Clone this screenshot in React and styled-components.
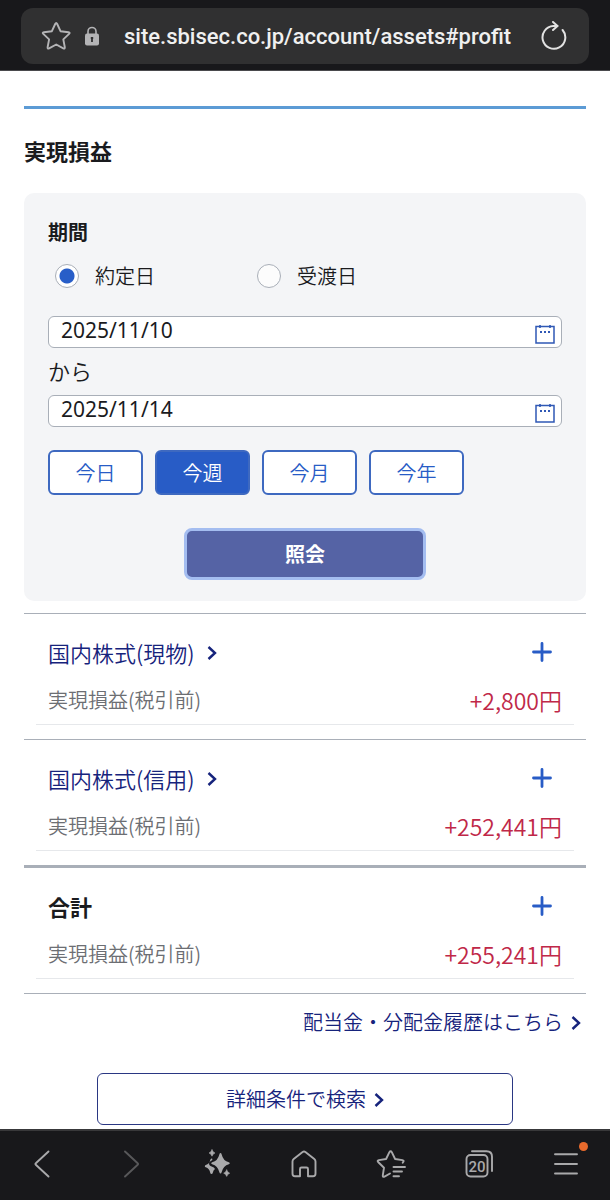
import React, { useState } from 'react';
import styled, { createGlobalStyle } from 'styled-components';

const GlobalStyle = createGlobalStyle`
  * {
    box-sizing: border-box;
  }

  body {
    margin: 0;
    background: #ffffff;
    color: #1a1b1e;
    font-family: 'Noto Sans CJK JP', 'Noto Sans', sans-serif;
    font-size: 20px;
    font-weight: 350;
    line-height: 28px;
  }

  button, input {
    font-family: inherit;
    font-size: inherit;
    font-weight: inherit;
    line-height: inherit;
    margin: 0;
  }

  button {
    cursor: pointer;
  }
`;

const Screen = styled.div`
  min-height: 100vh;
  display: flex;
  flex-direction: column;
`;

const BrowserBar = styled.header`
  padding: 8px 21px 6px;
  background: #18181b;
  border-bottom: 1px solid #4a4a4d;
`;

const AddressBar = styled.div`
  display: flex;
  align-items: center;
  height: 56px;
  padding: 0 20px;
  border-radius: 12px;
  background: #303031;
  color: #b4b4b6;
`;

const BarButton = styled.button`
  display: flex;
  padding: 0;
  border: 0;
  background: none;
  color: ${props => props.$color || 'inherit'};
`;

const Lock = styled.svg`
  margin-left: 13px;
`;

const Address = styled.span`
  flex: 1;
  margin-left: 24px;
  padding-top: 2px;
  color: #f0f0f0;
  font-family: Roboto, sans-serif;
  font-size: 22px;
  font-weight: 500;
  white-space: nowrap;
`;

const Content = styled.main`
  flex: 1;
  padding: 35px 24px 4px;
`;

const PageTitle = styled.h1`
  margin: 0;
  padding: 26px 0 27px;
  border-top: 3px solid #5c9bd5;
  font-size: 22px;
  line-height: 31px;
  font-weight: 700;
`;

const SearchPanel = styled.form`
  padding: 24px 24px 21px;
  border-radius: 10px;
  background: #f4f5f7;
`;

const PeriodTitle = styled.h2`
  margin: 0;
  font-size: 20px;
  line-height: 30px;
  font-weight: 700;
`;

const RadioRow = styled.div`
  display: flex;
  padding: 15px 0 26px 7px;
`;

const RadioLabel = styled.label`
  display: flex;
  align-items: center;
  gap: 16px;
  width: 202px;
`;

const Radio = styled.input`
  appearance: none;
  width: 24px;
  height: 24px;
  border: 1px solid #a9afb8;
  border-radius: 50%;
  background: #fcfcfc;

  &:checked {
    background: radial-gradient(circle, #285ec8 0 7px, #ffffff 8px);
  }
`;

const DateBox = styled.div`
  display: flex;
  height: 32px;
  border: 1px solid #a9afb8;
  border-radius: 6px;
  background: #ffffff;
`;

const DateInput = styled.input`
  flex: 1;
  min-width: 0;
  padding: 0 12px 4px;
  border: 0;
  outline: 0;
  background: none;
  color: #1a1b1e;
  font-family: 'Noto Sans', sans-serif;
  font-size: 21px;
  font-weight: 400;
`;

const CalendarButton = styled.button`
  display: flex;
  align-items: flex-end;
  padding: 0 6px 3px;
  border: 0;
  background: none;
`;

const Between = styled.p`
  margin: 0;
  padding: 6px 0 9px;
  font-size: 22px;
  line-height: 32px;
`;

const RangeButtons = styled.div`
  display: flex;
  gap: 12px;
  padding: 23px 0 33px;
`;

const RangeButton = styled.button`
  width: 95px;
  height: 45px;
  padding: 0;
  border: 2px solid #3e69c0;
  border-radius: 6px;
  background: ${props => props.$active ? '#285cc6' : '#ffffff'};
  color: ${props => props.$active ? '#ffffff' : '#285cc6'};
`;

const SubmitButton = styled.button`
  display: block;
  width: 242px;
  height: 52px;
  margin: 0 auto;
  padding: 0;
  border: 3px solid #a4bdf0;
  border-radius: 8px;
  background: #5563a5;
  color: #ffffff;
  font-weight: 700;
`;

const Summary = styled.div`
  margin-top: 12px;
  border-bottom: 1px solid #a9afb8;
`;

const SummaryItem = styled.section`
  padding: 0 12px 14px;
  border-top: ${props => props.$total ? 3 : 1}px solid #a9afb8;
`;

const ItemHead = styled.div`
  display: flex;
  align-items: center;
  justify-content: space-between;
  height: 62px;
  padding: 13px 22px 0 12px;
`;

const ItemTitle = styled.h3`
  margin: 0;
  font-size: 22px;
  line-height: 32px;
  font-weight: ${props => props.$total ? 700 : 'inherit'};
`;

const TextLink = styled.a`
  display: inline-flex;
  align-items: center;
  gap: 8px;
  color: #16237c;
  text-decoration: none;
`;

const ItemLink = styled(TextLink)`
  gap: 12px;
`;

const ChevronSvg = styled.svg`
  margin-top: 2px;
`;

const ExpandButton = styled.button`
  display: flex;
  padding: 0;
  border: 0;
  background: none;
`;

const ItemValue = styled.dl`
  display: flex;
  align-items: center;
  justify-content: space-between;
  height: 49px;
  margin: 0;
  padding: 0 12px;
  border-bottom: 1px solid #e6e8eb;
`;

const ValueLabel = styled.dt`
  color: #6c6e73;
`;

const Amount = styled.dd`
  margin: 0;
  color: #c02848;
  font-size: 23px;
`;

const HistoryRow = styled.div`
  display: flex;
  justify-content: flex-end;
  padding: 14px 5px 37px;
`;

const DetailLink = styled(TextLink)`
  display: flex;
  justify-content: center;
  width: 416px;
  max-width: 100%;
  height: 52px;
  margin: 0 auto;
  border: 1px solid #2a3783;
  border-radius: 6px;
`;

const BottomBar = styled.nav`
  display: flex;
  justify-content: space-between;
  align-items: center;
  height: 71px;
  padding: 0 28px 3px 26px;
  border-top: 2px solid #38383a;
  background: #18181b;
`;

const NavButton = styled.button`
  position: relative;
  display: flex;
  padding: 0;
  border: 0;
  background: none;
  color: ${props => props.$dim ? '#58585a' : '#a9a9ab'};
`;

const NoticeDot = styled.span`
  position: absolute;
  top: -6px;
  right: -6px;
  width: 9px;
  height: 9px;
  border-radius: 50%;
  background: #e86a2c;
`;

const Chevron = () => (
  <ChevronSvg width="10" height="16" viewBox="0 0 10 16" fill="none" stroke="currentColor" strokeWidth="2.4" aria-hidden="true">
    <path d="M1.5 2 8 8l-6.500 6" />
  </ChevronSvg>
);

const CalendarIcon = () => (
  <svg width="20" height="20" viewBox="0 0 20 20" fill="none" stroke="#2f58b5" aria-hidden="true">
    <path d="M1 2.500h18v16.500h-18z" strokeWidth="1.500" />
    <path d="M5 1v3M15 1v3" strokeWidth="1.600" />
    <path d="M5 8h2M9 8h2M13 8h2" strokeWidth="1.800" />
  </svg>
);

const PlusIcon = () => (
  <svg width="20" height="20" viewBox="0 0 20 20" fill="none" stroke="#285cc6" strokeWidth="2.800" strokeLinecap="round" aria-hidden="true">
    <path d="M10 1.500v17M1.500 10h17" />
  </svg>
);

const navIcon = {
  width: 32,
  height: 32,
  viewBox: '0 0 32 32',
  fill: 'none',
  stroke: 'currentColor',
  strokeWidth: 1.9,
  strokeLinecap: 'round',
  strokeLinejoin: 'round',
  'aria-hidden': true
};

const results = [
  { title: '国内株式(現物)', amount: '+2,800円' },
  { title: '国内株式(信用)', amount: '+252,441円' },
  { title: '合計', amount: '+255,241円', total: true }
];

const ranges = ['今日', '今週', '今月', '今年'];

const DateField = ({ label, value, onChange }) => (
  <DateBox>
    <DateInput type="text" aria-label={label} value={value} onChange={e => onChange(e.target.value)} />
    <CalendarButton type="button" aria-label={`${label}を選択`}>
      <CalendarIcon />
    </CalendarButton>
  </DateBox>
);

const App = () => {
  const [dateType, setDateType] = useState('約定日');
  const [from, setFrom] = useState('2025/11/10');
  const [to, setTo] = useState('2025/11/14');
  const [range, setRange] = useState('今週');

  return (
    <Screen>
      <GlobalStyle />
      <BrowserBar>
        <AddressBar>
          <BarButton aria-label="ブックマーク">
            <svg width="30" height="30" viewBox="0 0 30 30" fill="none" stroke="currentColor" strokeWidth="1.900" strokeLinejoin="round">
              <path d="M14.200 3q1-2 2 0l3.300 7.200 8 1q2 .3 .6 1.700l-5.800 5.500 1.500 7.800q.3 2-1.500 1.100l-7.100-3.800-7.100 3.800q-1.800.9-1.500-1.100l1.500-7.800-5.800-5.500q-1.400-1.400.6-1.700l8-1z" />
            </svg>
          </BarButton>
          <Lock width="16" height="20" viewBox="0 0 16 20" aria-hidden="true">
            <path d="M4 9V5.500a4 4 0 0 1 8 0V9" fill="none" stroke="currentColor" strokeWidth="1.600" />
            <rect x="1" y="7.500" width="14" height="12" rx="2" fill="currentColor" />
            <path d="M8 11v5M6.800 12h2.400" stroke="#303031" strokeWidth="1.800" />
          </Lock>
          <Address>site.sbisec.co.jp/account/assets#profit</Address>
          <BarButton aria-label="再読み込み" $color="#e2e2e2">
            <svg width="30" height="30" viewBox="0 0 30 30" fill="none" stroke="currentColor" strokeWidth="2" strokeLinecap="round" strokeLinejoin="round">
              <path d="M23.600 9A11.400 11.400 0 1 1 14.300 5h4" />
              <path d="M14 1l4.500 4-4.500 4" />
            </svg>
          </BarButton>
        </AddressBar>
      </BrowserBar>

      <Content>
        <PageTitle>実現損益</PageTitle>
        <SearchPanel onSubmit={e => e.preventDefault()}>
          <PeriodTitle>期間</PeriodTitle>
          <RadioRow>
            {['約定日', '受渡日'].map(name => (
              <RadioLabel key={name}>
                <Radio type="radio" name="dateType" checked={dateType === name} onChange={() => setDateType(name)} />
                {name}
              </RadioLabel>
            ))}
          </RadioRow>
          <DateField label="開始日" value={from} onChange={setFrom} />
          <Between>から</Between>
          <DateField label="終了日" value={to} onChange={setTo} />
          <RangeButtons>
            {ranges.map(name => (
              <RangeButton key={name} type="button" $active={range === name} onClick={() => setRange(name)}>
                {name}
              </RangeButton>
            ))}
          </RangeButtons>
          <SubmitButton type="submit">照会</SubmitButton>
        </SearchPanel>

        <Summary>
          {results.map(item => (
            <SummaryItem key={item.title} $total={item.total}>
              <ItemHead>
                <ItemTitle $total={item.total}>
                  {item.total ? item.title : <ItemLink href="#profit">{item.title}<Chevron /></ItemLink>}
                </ItemTitle>
                <ExpandButton type="button" aria-label={`${item.title}を開く`}>
                  <PlusIcon />
                </ExpandButton>
              </ItemHead>
              <ItemValue>
                <ValueLabel>実現損益(税引前)</ValueLabel>
                <Amount>{item.amount}</Amount>
              </ItemValue>
            </SummaryItem>
          ))}
        </Summary>

        <HistoryRow>
          <TextLink href="#history">配当金・分配金履歴はこちら<Chevron /></TextLink>
        </HistoryRow>
        <DetailLink href="#search">詳細条件で検索<Chevron /></DetailLink>
      </Content>

      <BottomBar>
        <NavButton aria-label="戻る">
          <svg {...navIcon}><path d="M22.500 3.500 9.800 15.300q-.8.7 0 1.400L22.500 28.500" /></svg>
        </NavButton>
        <NavButton aria-label="進む" $dim>
          <svg {...navIcon}><path d="M12 3.500l12.700 11.800q.8.7 0 1.400L12 28.500" /></svg>
        </NavButton>
        <NavButton aria-label="AIアシスト">
          <svg {...navIcon} fill="currentColor" stroke="none">
            <path d="M19.500 5q.8 0 1 1 1.800 7.200 7.300 8.300 1 .3 1 1t-1 1q-5.500 1.200-7.300 8.300-.2 1-1 1t-1-1q-1.800-7.100-7.300-8.300-1-.3-1-1t1-1q5.500-1.100 7.300-8.300.2-1 1-1z" />
            <path d="M10.500 10q.8.200.8 1.400l.1.700-1.900 1.200q-1.500 1-1.500 2.400t1.500 2.200l3.300 1.500 1.200 1.600q-1.700 1.300-2.300 3.900-.2 1-1.200 1t-1.200-1q-1-4.600-4.500-5.600-1-.3-1-1.100t1-1.100q3.700-1 4.500-5.300.2-1 1.200-.8z" />
            <path d="M11 1.800q.9 2.600 3 3.200-2.100.6-3 3.200-.9-2.600-3-3.200 2.100-.6 3-3.200zM25.700 22q.9 2.600 3 3.200-2.100.6-3 3.200-.9-2.600-3-3.200 2.100-.6 3-3.200z" stroke="currentColor" strokeWidth=".6" />
          </svg>
        </NavButton>
        <NavButton aria-label="ホーム">
          <svg {...navIcon}>
            <path d="M4.500 13.500q0-1.500 1.200-2.500l8.900-7q1.400-1 2.800 0l8.900 7q1.200 1 1.200 2.500v12q0 2.800-2.500 2.800H20v-7.300q0-1.500-1.500-1.500h-5Q12 19.500 12 21v7.300H7q-2.500 0-2.500-2.800z" />
          </svg>
        </NavButton>
        <NavButton aria-label="ブックマーク一覧">
          <svg {...navIcon}>
            <path d="M15 25.500l-5.500 3.100q-2 .8-1.700-1.300l1.200-7.600-5.900-5.700q-1.200-1.500.7-1.900l7.300-1.100 3.300-6.800q1.200-1.900 2.400 0l3.300 6.800 7.300 1.100q1.900.4.9 1.700l-.6.9" />
            <path d="M18.500 19h11.500M18.500 23.500h8.500M18.500 28.300h5.500" />
          </svg>
        </NavButton>
        <NavButton aria-label="タブ 20">
          <svg {...navIcon}>
            <rect x="3.500" y="7" width="21" height="21.500" rx="4" />
            <path d="M9 3.200h14.500q5.500 0 5.500 5.500V23" />
            <text x="14" y="23.500" textAnchor="middle" fill="currentColor" stroke="none" fontFamily="Roboto, sans-serif" fontSize="15" fontWeight="500">20</text>
          </svg>
        </NavButton>
        <NavButton aria-label="メニュー">
          <svg {...navIcon}><path d="M5 6.200h22M5 16h22M5 25.500h22" /></svg>
          <NoticeDot />
        </NavButton>
      </BottomBar>
    </Screen>
  );
};

export default App;
